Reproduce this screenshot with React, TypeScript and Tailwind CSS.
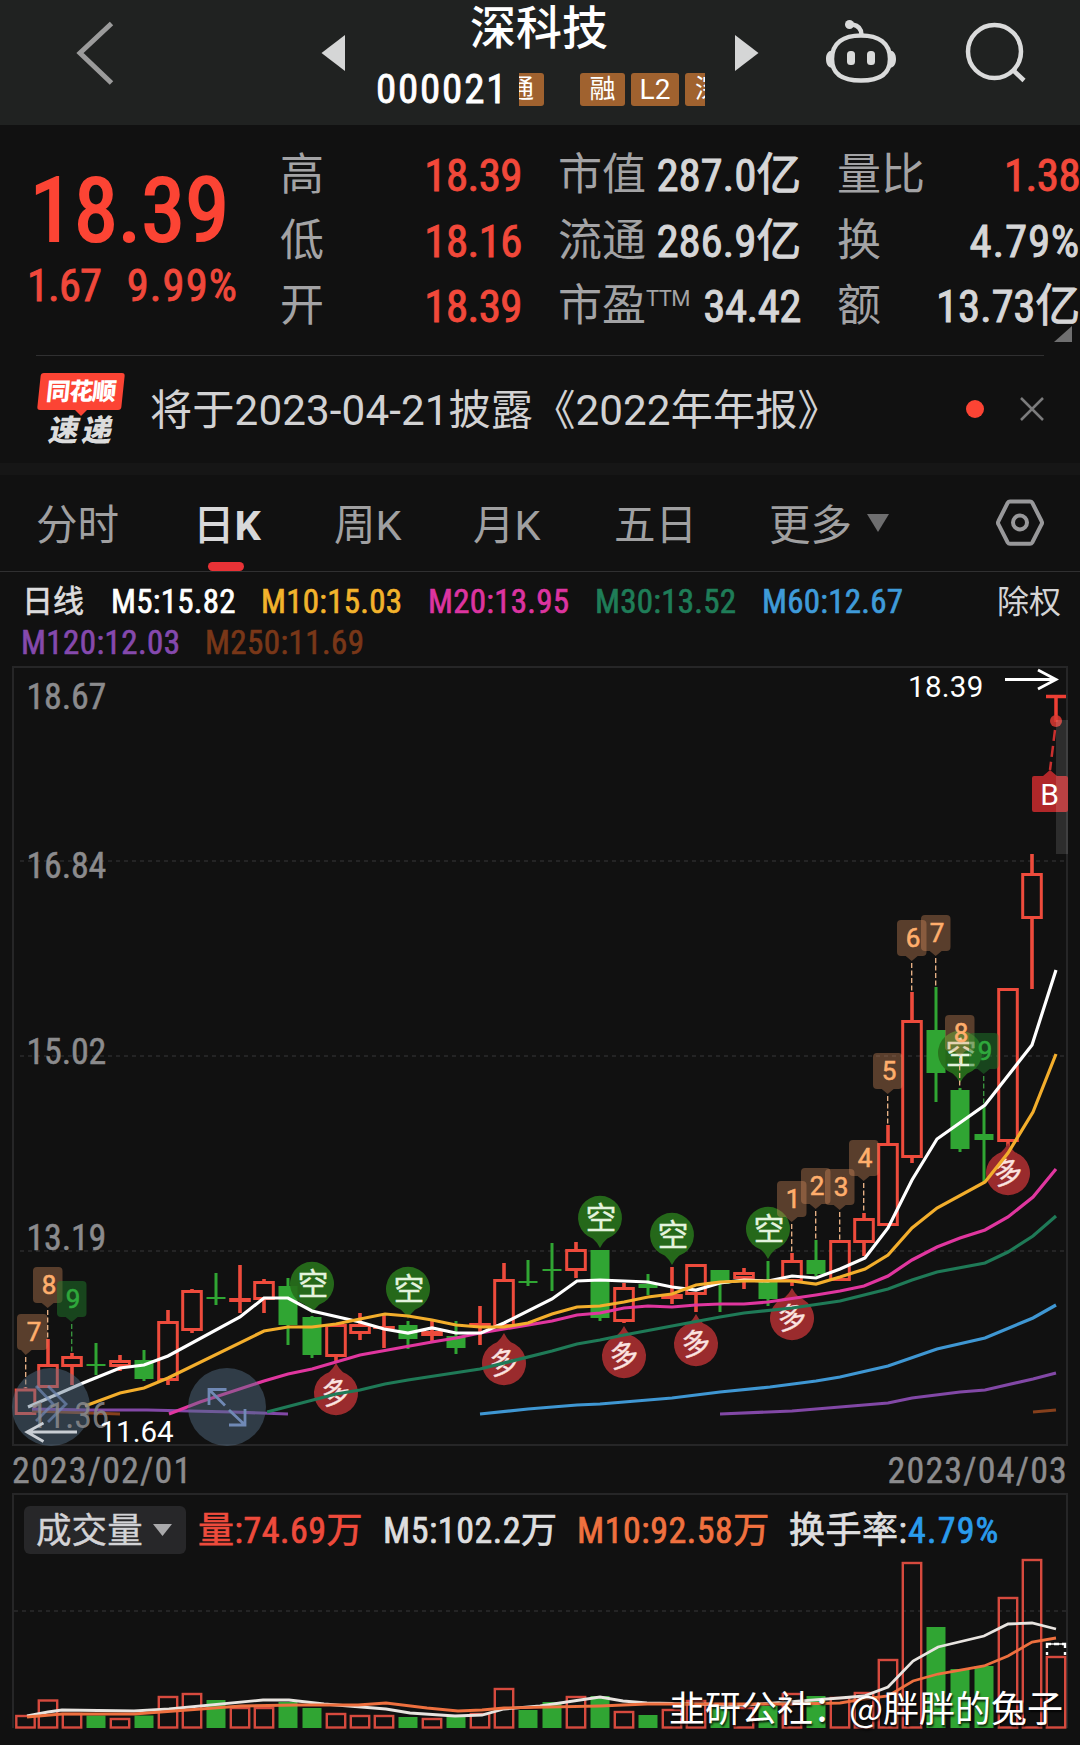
import React from "react";
import clsx from "clsx";

const RED = "#ee4b3c";
const GREEN = "#30a533";

type Kind = "r" | "g";

// [high, body top, body bottom, low, kind], one entry per trading day
const candles: [number, number, number, number, Kind][] = [
  [1387, 1388.5, 1415, 1415, "r"],
  [1339, 1364, 1388, 1388, "r"],
  [1353, 1356, 1367, 1385, "r"],
  [1343, 1364, 1366, 1375, "g"],
  [1355, 1360, 1367, 1371, "r"],
  [1350, 1360, 1379, 1381, "g"],
  [1310, 1321, 1381, 1385, "r"],
  [1289, 1290, 1331, 1333, "r"],
  [1273, 1297, 1299, 1305, "g"],
  [1265, 1298, 1302, 1313, "r"],
  [1279, 1281, 1300, 1313, "r"],
  [1278, 1286, 1325, 1345, "g"],
  [1316, 1317, 1355, 1358, "g"],
  [1323, 1324, 1357, 1361, "r"],
  [1313, 1324, 1334, 1340, "r"],
  [1313, 1326, 1329, 1348, "r"],
  [1321, 1325, 1339, 1349, "g"],
  [1321, 1331, 1336, 1342, "r"],
  [1321, 1336, 1348, 1354, "g"],
  [1306, 1323, 1327, 1345, "r"],
  [1263, 1279, 1327, 1327, "r"],
  [1260, 1281, 1283, 1286, "g"],
  [1243, 1269, 1271, 1291, "g"],
  [1242, 1249, 1271, 1278, "r"],
  [1250, 1250, 1318, 1321, "g"],
  [1283, 1287, 1322, 1323, "r"],
  [1274, 1284, 1288, 1295, "g"],
  [1267, 1294, 1299, 1304, "r"],
  [1264, 1264, 1295, 1312, "r"],
  [1270, 1270, 1284, 1312, "g"],
  [1268, 1272, 1279, 1289, "r"],
  [1261, 1282, 1299, 1306, "g"],
  [1253, 1260, 1282, 1286, "r"],
  [1240, 1260, 1274, 1276, "g"],
  [1240, 1240, 1281, 1281, "r"],
  [1213, 1218, 1243, 1256, "r"],
  [1125, 1143, 1226, 1226, "r"],
  [992, 1020, 1158, 1163, "r"],
  [987, 1030, 1073, 1102, "g"],
  [1088, 1090, 1149, 1152, "g"],
  [1105, 1134, 1140, 1182, "g"],
  [988, 988, 1142, 1146, "r"],
  [854, 873, 919, 989, "r"],
];

const volumes: [number, Kind][] = [
  [1715, "r"], [1699.5, "r"], [1713, "r"], [1715.5, "g"], [1718, "r"], [1715.5, "g"],
  [1696, "r"], [1693, "r"], [1700, "g"], [1707, "r"], [1707, "r"], [1702, "g"],
  [1708, "g"], [1713, "r"], [1715, "r"], [1715, "r"], [1717, "g"], [1718, "r"],
  [1717, "g"], [1713, "r"], [1688, "r"], [1710, "g"], [1702, "g"], [1696, "r"],
  [1696, "g"], [1711, "r"], [1715, "g"], [1709, "r"], [1700, "r"], [1707, "g"],
  [1707, "r"], [1706, "g"], [1693, "r"], [1696, "g"], [1697, "r"], [1692, "r"],
  [1659, "r"], [1562, "r"], [1627, "g"], [1669, "g"], [1666, "g"], [1597, "r"],
  [1559, "r"], [1656, "r"],
];

const averages = [
  { color: "#8248a6", points: "32,1409 90,1410 147,1410 233,1412 288,1414" },
  { color: "#8248a6", points: "720,1414 792,1411 888,1403 912,1398 960,1392 985,1390 1033,1379 1056,1373" },
  { color: "#86401c", points: "1033,1412 1056,1410" },
  { color: "#3f97d3", points: "480,1414 528,1409 577,1405 600,1404 672,1398 720,1392 770,1387 816,1381 840,1377 888,1366 937,1349 985,1338 1033,1318 1056,1305" },
  { color: "#1f7a57", points: "267,1412 313,1400 336,1394 360,1390 385,1384 408,1380 480,1369 552,1351 577,1344 600,1340 624,1335 720,1317 744,1313 792,1308 840,1301 888,1289 912,1280 937,1272 985,1263 1008,1252 1033,1236 1056,1216" },
  { color: "#e0369f", points: "169,1414 200,1402 264,1381 288,1374 312,1369 360,1355 432,1342 456,1338 480,1333 552,1321 577,1315 600,1313 624,1308 648,1306 672,1307 696,1305 720,1304 744,1304 768,1302 816,1295 840,1291 864,1286 888,1276 912,1260 937,1247 960,1238 985,1230 1008,1217 1033,1197 1056,1169" },
  { color: "#ffffff", points: "28,1407 83,1383 120,1368 144,1365 168,1356 240,1317 264,1298 288,1298 312,1311 360,1322 384,1329 408,1333 432,1328 456,1333 481,1333 504,1323 552,1299 577,1281 600,1280 648,1282 672,1287 696,1290 720,1283 744,1280 768,1281 792,1276 816,1278 840,1269 865,1258 888,1228 912,1180 937,1139 985,1105 1032,1045 1056,970" },
  { color: "#f3ae2c", points: "85,1406 120,1393 144,1388 168,1378 264,1331 288,1327 312,1327 336,1324 360,1319 385,1314 408,1316 432,1320 456,1325 480,1327 504,1327 528,1323 552,1314 577,1307 600,1306 624,1302 648,1297 672,1294 696,1285 720,1282 744,1281 792,1281 816,1284 840,1277 865,1269 888,1255 912,1228 937,1208 985,1182 1008,1153 1033,1112 1056,1054" },
];

const VOL_M5 =
  "27,1716 48,1712 62,1710 134,1711 169,1709 263,1700 289,1700 324,1704 386,1709 410,1713 455,1716 482,1715 504,1709 540,1706 600,1697 623,1701 647,1703 747,1705 840,1698 864,1696 888,1687 913,1661 938,1647 984,1636 1008,1624 1032,1623 1056,1629";
const VOL_M10 =
  "27,1717 62,1714 134,1714 241,1706 296,1705 358,1705 386,1703 427,1708 458,1711 482,1710 504,1708 600,1706 647,1704 795,1704 840,1703 864,1699 888,1696 913,1681 938,1674 984,1666 1008,1656 1032,1642 1056,1638";

// [digit, left, top, tip x, end of the dashed stem, green]
const counters: [string, number, number, number, number, boolean?][] = [
  ["7", 18, 1314, 25.7, 1388],
  ["8", 33, 1267, 47.7, 1339],
  ["9", 57, 1281, 71.7, 1353, true],
  ["1", 777, 1181, 791.7, 1253],
  ["2", 801, 1168, 815.7, 1240],
  ["3", 825, 1169, 839.7, 1240],
  ["4", 849, 1140, 863.7, 1213],
  ["5", 873, 1053, 887.7, 1125],
  ["6", 897, 920, 911.7, 992],
  ["7", 921, 915, 935.7, 987],
  ["8", 945, 1015, 959.7, 1088],
  ["9", 969, 1033, 983.7, 1105, true],
];

const shortPins = [[312, 1284], [408, 1289], [600, 1218], [672, 1235], [768, 1229], [960, 1053]];
const longPins = [[336, 1393], [504, 1363], [624, 1356], [696, 1344], [792, 1318], [1008, 1173]];

const dayX = (i: number) => (i === 0 ? 25.5 : 24 + i * 24);

function Header() {
  return (
    <header className="flex h-[125px] bg-[#202221]">
      <svg className="h-[125px] w-[377px] shrink-0" viewBox="0 0 377 125" fill="none">
        <path d="M111.500 23.500 80 53l31.500 30" stroke="#9b9b9b" strokeWidth="5" />
        <path d="M321.500 53 345 35v36z" fill="#d5d6d6" />
      </svg>
      <div className="w-[328px] shrink-0 overflow-hidden">
        <div className="pl-[93px] pt-[5px] text-[46px] font-medium leading-[46px] text-white">深科技</div>
        <div className="mt-4 flex h-11 items-center">
          <span className="-ml-px w-[143px] shrink-0 text-[41px] leading-[44px] tracking-[1.8px] text-white [-webkit-text-stroke:0.02em]">
            000021
          </span>
          <div className="flex w-[25px] shrink-0 justify-end overflow-hidden rounded-r-[3px] bg-[#a0622f] pr-2.5 text-[26px] leading-[33px] text-white">
            <span>通</span>
          </div>
          <div className="ml-9 w-[45px] shrink-0 rounded-[3px] bg-[#a0622f] text-center text-[26px] leading-[33px] text-white">
            融
          </div>
          <div className="ml-1.5 w-12 shrink-0 rounded-[3px] bg-[#a0622f] text-center font-['Roboto'] text-[28px] leading-[33px] text-white">
            L2
          </div>
          <div className="ml-1.5 w-11 shrink-0 rounded-[3px] bg-[#a0622f] pl-2.5 text-[26px] leading-[33px] text-white">深</div>
        </div>
      </div>
      <svg className="h-[125px] w-[375px] shrink-0" viewBox="705 0 375 125" fill="none">
        <path d="M735 35v36l23.500-18z" fill="#d5d6d6" />
        <g stroke="#dadbdb" strokeWidth="4.500">
          <path d="M861 35.500c17 0 29 7 29 23.500s-12 21.500-29 21.500-29-5-29-21.500 12-23.500 29-23.500z" />
          <path d="M861.500 35c0-6-3-9.500-9-10.500" />
          <circle cx="994.500" cy="51.500" r="26.500" />
          <path d="m1013 70 11 10.500" />
        </g>
        <g fill="#dadbdb">
          <circle cx="849.500" cy="24.500" r="4.500" />
          <path d="M832.500 50.500c-4 0-6.500 3-6.500 8.500s2.500 9 6.500 9zM889.500 50.500c4 0 6.500 3 6.500 8.500s-2.500 9-6.500 9z" />
          <rect x="847" y="51" width="8" height="14" rx="3.500" />
          <rect x="867" y="51" width="8" height="14" rx="3.500" />
        </g>
      </svg>
    </header>
  );
}

function Stat({ label, value, red, className }: { label: React.ReactNode; value: string; red?: boolean; className?: string }) {
  return (
    <div className="flex h-[65.5px] items-center justify-between whitespace-nowrap leading-[65px]">
      <span className="text-[44px] text-[#a3a3a5]">{label}</span>
      <span
        className={clsx(
          "text-[45px] [-webkit-text-stroke:0.02em]",
          red ? "text-[#f2483a]" : "text-[#d6d6d7]",
          className ?? "tracking-[-0.6px]",
        )}
      >
        {value}
      </span>
    </div>
  );
}

function Quote() {
  return (
    <section className="relative flex h-[230px] pt-[18px]">
      <div className="w-[280px] shrink-0 text-[#fc4434]">
        <div className="pl-[30px] pt-[18px] text-[89px] leading-[100px] [-webkit-text-stroke:0.025em]">18.39</div>
        <div className="flex justify-between pl-[27px] pr-[42px] text-[44.5px] leading-[50px] text-[#f0483b] [-webkit-text-stroke:0.02em]">
          <span className="tracking-[-0.9px]">1.67</span>
          <span className="tracking-[1.1px]">9.99%</span>
        </div>
      </div>
      <div className="w-[242px] shrink-0">
        <Stat label="高" value="18.39" red />
        <Stat label="低" value="18.16" red />
        <Stat label="开" value="18.39" red />
      </div>
      <div className="ml-9 w-[243px] shrink-0">
        <Stat label="市值" value="287.0亿" className="tracking-[-0.2px]" />
        <Stat label="流通" value="286.9亿" className="tracking-[-0.2px]" />
        <Stat
          label={
            <>
              市盈<span className="relative -top-[15px] font-['Roboto'] text-[22px] leading-none tracking-[-0.6px]">TTM</span>
            </>
          }
          value="34.42"
        />
      </div>
      <div className="ml-9 w-[243px] shrink-0">
        <Stat label="量比" value="1.38" red />
        <Stat label="换" value="4.79%" className="tracking-[0.7px]" />
        <Stat label="额" value="13.73亿" className="tracking-[-0.3px]" />
      </div>
      <svg className="absolute left-[1054px] top-[201px] h-4 w-[18px]" viewBox="0 0 18 16">
        <path d="M18 0v16H0z" fill="#6f6f70" />
      </svg>
    </section>
  );
}

function Notice() {
  return (
    <section className="mx-9 flex h-[108px] border-t border-[#303031]">
      <div className="mt-[17px] w-[90px] shrink-0 text-center">
        <div className="mx-auto h-[37px] w-[84px] -skew-x-6 rounded-[3px] bg-[#fc4434] text-[24px] font-black leading-[38px] tracking-[-1px] text-white">
          同花顺
        </div>
        <svg className="mx-auto block h-1.5 w-3" viewBox="0 0 12 6">
          <path d="M0 0h12L6 6z" fill="#fc4434" />
        </svg>
        <div className="-mr-1 -mt-px -skew-x-12 text-[30px] font-black leading-[32px] tracking-[3.5px] text-[#dcdcdc]">速递</div>
      </div>
      <p className="ml-6 whitespace-nowrap pt-0.5 font-['Roboto','Noto_Sans_CJK_SC',sans-serif] text-[42.2px] leading-[106px] tracking-[0.1px] text-[#d2d2d3]">
        将于2023-04-21披露《2022年年报》
      </p>
      <svg className="ml-auto mt-[40px] h-7 w-[80px] shrink-0" viewBox="0 0 80 28" fill="none">
        <circle cx="11" cy="13" r="9" fill="#fc4434" />
        <path d="m57 2 22 22M79 2 57 24" stroke="#7b7b7c" strokeWidth="2.500" />
      </svg>
    </section>
  );
}

function Tabs() {
  return (
    <nav className="flex h-[97px] whitespace-nowrap border-b border-[#303031] font-['Roboto','Noto_Sans_CJK_SC',sans-serif] text-[41.5px] leading-[101px] text-[#a0a0a1]">
      <div className="w-[160px] shrink-0 pl-9">分时</div>
      <div className="flex w-[174px] shrink-0 flex-col text-[#d8d8d9]">
        <span className="h-[87px] pl-[33px] font-medium">
          日<b>K</b>
        </span>
        <span className="ml-12 h-[9px] w-9 rounded-full bg-[#e93236]" />
      </div>
      <div className="w-[139px] shrink-0">周K</div>
      <div className="w-[141px] shrink-0">月K</div>
      <div className="w-[155px] shrink-0">五日</div>
      <div className="flex grow items-start">
        更多
        <svg className="ml-[15px] mt-[39px] h-[18px] w-[22px]" viewBox="0 0 22 18">
          <path d="M0 0h22L11 18z" fill="#6e6e6f" />
        </svg>
      </div>
      <svg className="mr-9 mt-6 h-12 w-12 shrink-0" viewBox="0 0 48 48" fill="none" stroke="#98989a" strokeWidth="4">
        <path d="M14 2.500h20q1.500 0 2.300 1.300L45.500 22q1 1.700 0 3.400L36.300 43.500q-.8 1.300-2.300 1.300H14q-1.500 0-2.300-1.300L2.500 25.400q-1-1.700 0-3.400L11.700 3.800q.8-1.300 2.300-1.300z" />
        <circle cx="24" cy="23.500" r="7" />
      </svg>
    </nav>
  );
}

function Averages() {
  return (
    <section className="h-[88px] whitespace-nowrap pl-[22px] pt-[9px] text-[33px] leading-[42px] tracking-[0.25px] [-webkit-text-stroke:0.02em]">
      <div className="flex">
        <span className="w-[89px] text-[31px] tracking-normal text-[#dcdcdd]">日线</span>
        <span className="w-[150px] text-white">M5:15.82</span>
        <span className="w-[167px] text-[#f3b32c]">M10:15.03</span>
        <span className="w-[167px] text-[#dd34a0]">M20:13.95</span>
        <span className="w-[167px] text-[#1f7d58]">M30:13.52</span>
        <span className="text-[#3f9bd9]">M60:12.67</span>
        <span className="ml-auto mr-[19px] text-[32px] tracking-normal text-[#d4d4d5] [-webkit-text-stroke:0]">除权</span>
      </div>
      <div className="-mt-px flex">
        <span className="-ml-px w-[184px] tracking-[0.4px] text-[#8549ad]">M120:12.03</span>
        <span className="tracking-[0.4px] text-[#793718]">M250:11.69</span>
      </div>
    </section>
  );
}

function Candle({ x, data }: { x: number; data: (typeof candles)[number] }) {
  const [high, top, bottom, low, kind] = data;
  if (kind === "g") {
    return (
      <g fill={GREEN}>
        <rect x={x - 1.5} y={high} width={3} height={low - high} />
        <rect x={x - 9.5} y={top} width={19} height={bottom - top} />
      </g>
    );
  }
  return (
    <g>
      <path d={`M${x} ${high}V${top}M${x} ${bottom}V${low}`} stroke={RED} strokeWidth={3.6} />
      {bottom - top < 6 ? (
        <rect x={x - 10.8} y={top} width={21.6} height={bottom - top} fill={RED} />
      ) : (
        <rect x={x - 9.3} y={top + 1.5} width={18.6} height={bottom - top - 3} fill="none" stroke={RED} strokeWidth={3} />
      )}
    </g>
  );
}

function Counter({ data }: { data: (typeof counters)[number] }) {
  const [digit, left, top, tip, end, green] = data;
  return (
    <g>
      <path
        d={`M${left + 4} ${top}h21.500q4 0 4 4v28q0 4-4 4H${tip + 6}L${tip} ${top + 41}L${Math.max(tip - 6, left + 3)} ${top + 36}h${-Math.max(tip - 10 - left, 0)}q-4 0-4-4v-28q0-4 4-4z`}
        fill={green ? "#1f7a2a" : "#e69560"}
        fillOpacity={green ? 0.5 : 0.34}
      />
      <path d={`M${tip} ${top + 43}V${end}`} stroke={green ? "#3b9a40" : "#f0b78a"} strokeWidth={1.3} strokeDasharray="5 2.500" />
      <text
        x={left + 16}
        y={top + 27}
        textAnchor="middle"
        fontSize={26}
        className="font-['Roboto']"
        fill={green ? "#2fa83c" : "#ffae6c"}
        stroke={green ? "#2fa83c" : "#ffae6c"}
        strokeWidth={0.6}
      >
        {digit}
      </text>
    </g>
  );
}

function PriceChart() {
  return (
    <svg className="block h-[790px] w-full" viewBox="0 660 1080 790" fill="none">
      <rect x="13" y="667" width="1054" height="778" stroke="#262627" strokeWidth="2" />
      <path d="M20 861H1066M20 1056H1066M20 1251H1066" stroke="#2b2b2c" strokeWidth="1.500" strokeDasharray="4 4" />
      <g fill="#8b8b8d" fontSize="36" letterSpacing="-0.200" stroke="#8b8b8d" strokeWidth="0.500">
        <text x="26.500" y="709">18.67</text>
        <text x="26.500" y="878">16.84</text>
        <text x="26.500" y="1064">15.02</text>
        <text x="26.500" y="1250">13.19</text>
      </g>

      {candles.map((c, i) => (
        <Candle key={i} x={dayX(i)} data={c} />
      ))}
      <path d="M1046 696.500h20M1056 696v26" stroke="#ee3f34" strokeWidth="3.500" />

      {shortPins.map(([x, y]) => (
        <g key={x}>
          <path
            d={`M${x - 7} ${y + 20.7}A22 22 0 1 1 ${x + 7} ${y + 20.7}Q${x + 3} ${y + 24} ${x} ${y + 30}Q${x - 3} ${y + 24} ${x - 7} ${y + 20.7}z`}
            fill="#27701b"
            fillOpacity="0.920"
          />
          <text x={x + 1} y={y + 11} textAnchor="middle" fontSize="31" fill="#e4f3de" stroke="#e4f3de" strokeWidth="0.300">
            空
          </text>
        </g>
      ))}
      {longPins.map(([x, y]) => (
        <g key={x}>
          <path
            d={`M${x - 7} ${y - 20.7}A22 22 0 1 0 ${x + 7} ${y - 20.7}Q${x + 3} ${y - 24} ${x} ${y - 30}Q${x - 3} ${y - 24} ${x - 7} ${y - 20.7}z`}
            fill="#a22d2f"
            fillOpacity="0.950"
          />
          <text
            x={x}
            y={y + 10}
            textAnchor="middle"
            fontSize="29"
            fill="#fbe3e0"
            stroke="#fbe3e0"
            strokeWidth="0.400"
            transform={`rotate(-10 ${x} ${y})`}
          >
            多
          </text>
        </g>
      ))}

      {counters.map((c, i) => (
        <Counter key={i} data={c} />
      ))}

      <path d="M32 1411 120 1414" stroke="#86401c" strokeWidth="2.800" />
      {averages.map((line, i) => (
        <polyline key={i} points={line.points} stroke={line.color} strokeWidth="3.200" />
      ))}

      {/* floating buttons over the first candles */}
      <g fill="#56708a" fillOpacity="0.450">
        <circle cx="51" cy="1407" r="39" />
        <circle cx="227" cy="1407" r="39" />
      </g>
      <g stroke="#7089b5" strokeWidth="2.800">
        <path d="m36 1386 17 18-17 17M48 1386l18 18-18 18" strokeOpacity="0.700" />
        <path d="M226.500 1389.500H209V1405M209 1389.500l16 16M229 1425h16v-16M245 1425l-16-15" />
      </g>
      <text x="30" y="1428" fontSize="36" fill="#8b8b8d" fillOpacity="0.850" letterSpacing="-0.300">11.36</text>
      <path d="M77 1432H27M43.500 1423 27 1432l16.500 9.500" stroke="#c9ced4" strokeWidth="2.800" />
      <path d="M1005 679.500h51M1038 670l18 9.500-18 9.500" stroke="#fff" strokeWidth="2.800" />
      <g className="font-['Roboto']" fontSize="29.500" fill="#fff">
        <text x="99.500" y="1441.500">11.64</text>
        <text x="908" y="697" letterSpacing="0.300">18.39</text>
      </g>

      <path d="m1055 730-5 40" stroke="#c9302f" strokeWidth="2.500" strokeDasharray="11 5" />
      <circle cx="1056" cy="721" r="6" fill="#d93a33" fillOpacity="0.850" />
      <path d="M1034 776h9l7-6 7 6h9q2 0 2 2v32q0 2-2 2h-32q-2 0-2-2v-32q0-2 2-2z" fill="#b02729" />
      <text x="1049.500" y="805" textAnchor="middle" fontSize="30" fill="#fff" className="font-['Roboto']">B</text>
      <rect x="1056" y="720" width="12" height="134" fill="#fff" fillOpacity="0.120" />
    </svg>
  );
}

function VolumeChart() {
  return (
    <svg className="block h-[190px] w-full" viewBox="0 1555 1080 190" fill="none">
      <path d="M13 1555V1728M1067 1555V1728" stroke="#262627" strokeWidth="2" />
      <path d="M14 1611H1066" stroke="#2b2b2c" strokeWidth="1.500" strokeDasharray="4 4" />
      {volumes.map(([top, kind], i) =>
        kind === "g" ? (
          <rect key={i} x={dayX(i) - 9.5} y={top} width={19} height={1728 - top} fill={GREEN} />
        ) : (
          <rect key={i} x={dayX(i) - 9.2} y={top + 1} width={18.4} height={1726.500 - top} stroke="#d64a3e" strokeWidth={2.4} />
        ),
      )}
      <polyline points={VOL_M5} stroke="#e8e4e0" strokeWidth="2.800" />
      <polyline points={VOL_M10} stroke="#ee703f" strokeWidth="2.800" />
      {/* projected volume for the running session */}
      <path d="M1047 1655v-3M1047 1648v-4h4M1054 1644h5M1062 1644h3v4M1065 1652v3" stroke="#fff" strokeWidth="2.400" />
      <path d="M1047 1644h18" stroke="#fff" strokeWidth="2" strokeOpacity="0.700" />
    </svg>
  );
}

export default function App() {
  return (
    <div className="relative h-[1745px] w-[1080px] overflow-hidden bg-[#111111] font-['Roboto_Condensed','Noto_Sans_CJK_SC',sans-serif]">
      <Header />
      <Quote />
      <Notice />
      <div className="h-3 bg-[#161616]" />
      <Tabs />
      <Averages />
      <PriceChart />
      <div className="flex h-[43px] justify-between pl-3 pr-3 text-[36px] leading-[43px] tracking-[1.15px] text-[#8b8b8d] [-webkit-text-stroke:0.4px]">
        <span>2023/02/01</span>
        <span>2023/04/03</span>
      </div>
      <div className="mx-3 flex h-[62px] whitespace-nowrap border-2 border-b-0 border-[#262627] pt-[11px] text-[36px] leading-[51px] tracking-[0.5px] [-webkit-text-stroke:0.02em]">
        <div className="ml-2.5 flex h-12 w-[162px] shrink-0 items-center rounded-md bg-[#272729] pl-3 text-[35.5px] tracking-[0.1px] text-[#d3d3d6] [-webkit-text-stroke:0.4px]">
          <span className="pt-[3px]">成交量</span>
          <svg className="ml-[10px] h-3 w-[19px]" viewBox="0 0 19 12">
            <path d="M0 0h19L9.500 12z" fill="#a9a9ab" />
          </svg>
        </div>
        <span className="ml-3 w-[185px] shrink-0 text-[#ee4b3c]">量:74.69万</span>
        <span className="w-[194px] shrink-0 text-[#dededf]">M5:102.2万</span>
        <span className="w-[212px] shrink-0 text-[#f0713f]">M10:92.58万</span>
        <span className="w-[119px] text-[#dededf]">换手率:</span>
        <span className="tracking-[1.2px] text-[#2a9bec]">4.79%</span>
      </div>
      <VolumeChart />
      <div className="absolute left-[669px] top-[1681px] whitespace-nowrap font-['Noto_Sans_CJK_SC',sans-serif] text-[36px] leading-[50px] text-white [text-shadow:1px_2px_2px_rgba(0,0,0,0.8)]">
        韭研公社：@胖胖的兔子
      </div>
    </div>
  );
}
